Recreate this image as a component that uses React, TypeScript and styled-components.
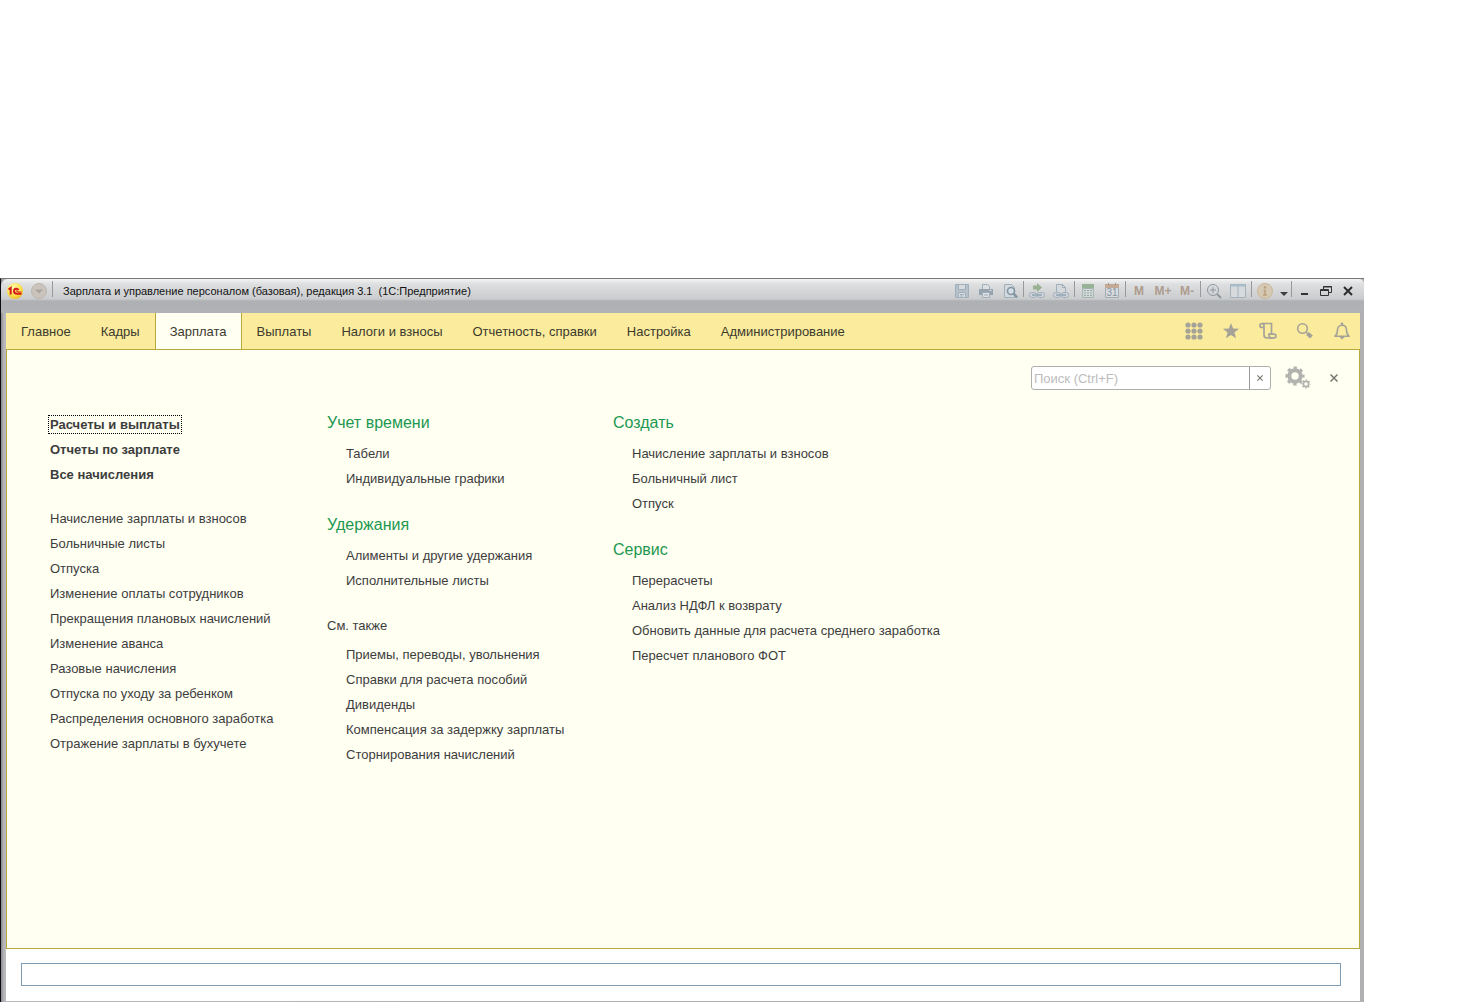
import React from "react";
import styled, { createGlobalStyle } from "styled-components";

const Global = createGlobalStyle`
  * { box-sizing: border-box; }
  body { margin: 0; background: #fff; color: #3d3d3d; font-family: "Liberation Sans", Arial, sans-serif; font-size: 13px; }
  button, input { font-family: inherit; }
`;

const Page = styled.div`
  display: flex;
  height: 100vh;
  min-height: 800px;
  padding: 278px 100px 0 0;
`;

const Window = styled.div`
  flex: 1;
  min-width: 0;
  display: flex;
  flex-direction: column;
  border-left: 1px solid #0c0c10;
  border-top: 1px solid #77787a;
  background: linear-gradient(90deg, #8b8a8e 0, #b8b7bb 3px, #b0b0b3 50%);
`;

const TitleBar = styled.header`
  height: 34px;
  display: flex;
  align-items: flex-start;
  padding: 0 5px 0 2px;
  border-radius: 7px 5px 0 0;
  background: linear-gradient(#f4f4f4 0, #dedfe0 5px, #cbccce 20px, #afb0b3 22px, #b1b2b5 34px);
`;

const Tools = styled.div`
  height: 24px;
  display: flex;
  align-items: center;
`;

const Title = styled.h1`
  flex: 1;
  min-width: 0;
  overflow: hidden;
  margin: 0 0 0 9px;
  line-height: 24px;
  font-size: 11px;
  font-weight: 400;
  color: #111;
  white-space: pre;
`;

const Divider = styled.span`
  width: 1px;
  height: 16px;
  margin: 0 1px 4px;
  background: #98999c;
`;

const Tool = styled.button<{ $w?: number }>`
  width: ${(p) => p.$w ?? 24}px;
  height: 24px;
  padding: 0;
  border: 0;
  background: none;
  display: flex;
  align-items: center;
  justify-content: center;
  font-size: 12px;
  font-weight: 700;
  color: #ad9c8f;
  svg { display: block; flex: none; }
`;

const Body = styled.div`
  flex: 1;
  min-height: 0;
  display: flex;
  flex-direction: column;
  margin: 0 4px 1px 5px;
  background: #fff;
`;

const Sections = styled.nav`
  height: 37px;
  display: flex;
  background: #faec9c;
  border-bottom: 1px solid #b9a93a;
`;

const Section = styled.a<{ $active?: boolean }>`
  height: 36px;
  padding: 0 15px;
  line-height: 37px;
  color: #3d3a2e;
  text-decoration: none;
  white-space: nowrap;
  background: ${(p) => (p.$active ? "#fffff2" : "none")};
  box-shadow: ${(p) => (p.$active ? "inset 1px 0 #b9a93a, inset -1px 0 #b9a93a" : "none")};
`;

const SectionTools = styled.div`
  margin-left: auto;
  display: flex;
  align-items: center;
`;

const Panel = styled.main`
  flex: 1;
  min-height: 0;
  padding: 16px 16px 0 43px;
  border: solid #b9a93a;
  border-width: 0 1px 1px;
  background: #fffff2;
`;

const PanelTools = styled.div`
  display: flex;
  justify-content: flex-end;
  align-items: center;
  gap: 14px;
  height: 24px;
`;

const Search = styled.div`
  width: 240px;
  height: 24px;
  display: flex;
  border: 1px solid #aeaeaa;
  border-radius: 3px;
  background: #fff;
  overflow: hidden;
`;

const SearchInput = styled.input`
  flex: 1;
  min-width: 0;
  border: 0;
  padding: 0 2px;
  outline: 0;
  font-size: 13px;
  background: none;
  &::placeholder { color: #bcbcbc; opacity: 1; }
`;

const Clear = styled.button`
  width: 21px;
  padding: 0;
  border: 0;
  border-left: 1px solid #999;
  background: none;
  display: grid;
  place-items: center;
`;

const Columns = styled.div`
  display: grid;
  grid-template-columns: 277px 286px 1fr;
  padding-top: 19px;
`;

const Column = styled.section``;

const Group = styled.ul<{ $indent?: boolean }>`
  list-style: none;
  margin: 0 0 ${(p) => (p.$indent ? 20 : 19)}px;
  padding: ${(p) => (p.$indent ? "4px 0 0 19px" : "3px 0 0")};
  & + & { padding-top: 0; }
`;

const Item = styled.li<{ $bold?: boolean }>`
  height: 25px;
  line-height: 25px;
  white-space: nowrap;
  font-weight: ${(p) => (p.$bold ? 700 : 400)};
`;

const Command = styled.a<{ $focus?: boolean }>`
  color: inherit;
  text-decoration: none;
  outline: ${(p) => (p.$focus ? "1px dotted #000" : "none")};
  outline-offset: 1px;
`;

const Heading = styled.h2`
  margin: 0;
  height: 28px;
  line-height: 28px;
  font-size: 16px;
  font-weight: 400;
  color: #1d9850;
`;

const SeeAlso = styled.h3`
  margin: 0;
  height: 25px;
  line-height: 25px;
  font-size: 13px;
  font-weight: 400;
`;

const StatusArea = styled.footer`
  height: 52px;
  padding: 14px 19px 0 15px;
`;

const StatusInput = styled.input`
  display: block;
  width: 100%;
  height: 23px;
  border: 1px solid #7f9bb2;
  background: #fff;
  outline: 0;
`;

const sections = ["Главное", "Кадры", "Зарплата", "Выплаты", "Налоги и взносы", "Отчетность, справки", "Настройка", "Администрирование"];

const BLUE = "#a0afbc";

function Svg({ w = 16, h = w, children }: { w?: number; h?: number; children: React.ReactNode }) {
  return (
    <svg width={w} height={h} viewBox={`0 0 ${w} ${h}`} fill="none" aria-hidden="true">
      {children}
    </svg>
  );
}

const Logo = () => (
  <svg width="18" height="18" viewBox="0 0 18 18" role="img" aria-label="1С">
    <defs>
      <radialGradient id="logo" cx=".4" cy=".3" r=".8">
        <stop offset="0" stopColor="#fffbb0" />
        <stop offset=".6" stopColor="#fbe04c" />
        <stop offset="1" stopColor="#e8b21c" />
      </radialGradient>
    </defs>
    <circle cx="9" cy="9" r="8" fill="url(#logo)" />
    <g fill="none" stroke="#d31d16" strokeWidth="2">
      <path d="M2.500 7.500 4.700 6v6.500" />
      <path d="M12.500 8C11.500 6 8 6.300 8 9s2 2.800 3 2.800h4.500" />
    </g>
    <path d="M10 9h1.500v1h4" fill="none" stroke="#d31d16" />
  </svg>
);

const MenuIcon = () => (
  <Svg w={18}>
    <circle cx="9" cy="9" r="7.500" fill="#cac4bc" stroke="#bbb5ad" />
    <path d="M5 7.500h8L9 11.500z" fill="#aaa49d" />
  </Svg>
);

const SaveIcon = () => (
  <Svg>
    <path d="M1.500 1.500h13v13h-13z" fill="#b7c1ca" stroke={BLUE} />
    <path d="M4.500 1.500h7v5h-7zM4.500 9.500h7v5h-7z" fill="#d8dcdf" stroke={BLUE} />
    <path d="M6 11.500h4M6 13h3" stroke={BLUE} />
  </Svg>
);

const PrintIcon = () => (
  <Svg>
    <path d="M4.500 6V1.500h5l2 2V6" fill="#dcdee0" stroke={BLUE} />
    <path d="M1 6h14v6H1z" fill="#97a4af" />
    <path d="M4.500 9.500h7v5h-7z" fill="#dcdee0" stroke={BLUE} />
    <path d="M6 12h4" stroke={BLUE} />
    <path d="M11.500 7.500h2" stroke="#dcdee0" />
  </Svg>
);

const PreviewIcon = () => (
  <Svg>
    <path d="M2.500 1.500h7l3 3v10h-10z" fill="#d6d9dc" stroke={BLUE} />
    <circle cx="9" cy="8" r="3.500" stroke="#8195a5" strokeWidth="1.700" fill="#d6e0e6" />
    <path d="m11.500 10.500 3.500 4" stroke="#8195a5" strokeWidth="2.500" />
  </Svg>
);

const Chain = () => (
  <g stroke={BLUE}>
    <rect x=".5" y="9.500" width="7" height="5" rx="2" fill="#cfd3d7" />
    <rect x="8.500" y="9.500" width="7" height="5" rx="2" fill="#cfd3d7" />
    <path d="M3 12h10" strokeWidth="2" />
  </g>
);

const LinkToIcon = () => (
  <Svg>
    <path d="M4 2.500h4V0l5 4.500L8 9V6.500H4z" fill="#97b191" />
    <Chain />
  </Svg>
);

const LinkDocIcon = () => (
  <Svg>
    <path d="M3.500 9.500v-8h6l3 3v5M9.500 1.500v3h3" fill="#d6d9dc" stroke={BLUE} />
    <Chain />
  </Svg>
);

const CalcIcon = () => (
  <Svg>
    <path d="M2 1h12v4H2z" fill="#97b297" />
    <path d="M2.500 5.500h11v9h-11z" fill="#d2d8d8" stroke="#a3b5af" />
    <path d="M4 7.500h8M4 10h8M4 12.500h8" stroke="#98aaa8" strokeDasharray="2 1" />
  </Svg>
);

const CalendarText = styled.text`
  font: 10px "Liberation Sans", Arial, sans-serif;
  fill: #8795a3;
`;

const CalendarIcon = () => (
  <Svg>
    <path d="M1.500 1.500h13v13h-13z" fill="#d8dbde" stroke="#a2adb6" />
    <path d="M1 1h14v4H1z" fill="#c3a996" />
    <path d="M4.500 0v2M11.500 0v2" stroke="#a98e7c" />
    <CalendarText x="8" y="13" textAnchor="middle">31</CalendarText>
  </Svg>
);

const ZoomIcon = () => (
  <Svg>
    <circle cx="7" cy="7" r="5.500" stroke="#8e979f" />
    <path d="M4 7h6M7 4v6" stroke="#8e979f" />
    <path d="m11 11 4 4" stroke="#8e979f" strokeWidth="2" />
  </Svg>
);

const PanesIcon = () => (
  <Svg>
    <path d="M.5 1.500h15v13H.5z" fill="#d6dadc" stroke="#a3b2bb" />
    <path d="M1 2.500h14" stroke="#a6bfca" strokeWidth="2" />
    <path d="M8 3v11" stroke="#a3b2bb" />
  </Svg>
);

const InfoIcon = () => (
  <Svg>
    <circle cx="8" cy="8" r="7.500" fill="#d5c9b4" stroke="#c8b899" />
    <circle cx="8" cy="4.500" r="1.300" fill="#b8a17e" />
    <path d="M6.500 7.500H8V12M6 12h4" stroke="#b8a17e" strokeWidth="1.500" />
  </Svg>
);

const CaretIcon = () => <Svg w={8} h={12}><path d="M0 7h8L4 11z" fill="#3c3d3f" /></Svg>;
const MinimizeIcon = () => <Svg w={12}><path d="M3 9h7" stroke="#333" strokeWidth="2" /></Svg>;
const RestoreIcon = () => (
  <Svg w={12}>
    <path d="M3.500 4V1.500h8v6H9" stroke="#333" />
    <path d="M3 2h9" stroke="#333" />
    <path d="M.5 4.500h8v6h-8zM.5 5.500h8" stroke="#333" />
  </Svg>
);
const CloseWindowIcon = () => <Svg w={10}><path d="m1 1 8 8M9 1 1 9" stroke="#2c2c2e" strokeWidth="2" /></Svg>;

const CrossIcon = ({ size }: { size: number }) => (
  <svg width={size} height={size} viewBox="0 0 8 8" aria-hidden="true">
    <path d="m.5.5 7 7M7.500.5l-7 7" stroke="#77776f" strokeWidth="1.500" />
  </svg>
);

const GREY = "#a5a298";

const GridIcon = () => (
  <Svg w={18}>
    {[3, 9, 15].flatMap((y) => [3, 9, 15].map((x) => <circle key={`${x}-${y}`} cx={x} cy={y} r="2.600" fill={GREY} />))}
  </Svg>
);
const StarIcon = () => (
  <Svg w={18}>
    <path d="m9 1 2.100 5.600 6 .2-4.700 3.700 1.700 5.800L9 13l-5.100 3.300 1.700-5.800L.9 6.800l6-.2z" fill={GREY} />
  </Svg>
);
const HistoryIcon = () => (
  <Svg w={18}>
    <g stroke={GREY} strokeWidth="1.700">
      <path d="M5 5.500H3a2 2 0 0 1 0-4h9.500V12" />
      <path d="M3 1.700c1.300 0 2 .8 2 2V13a3 3 0 0 0 3 3h7" />
      <path d="M10 12.200h5a1.900 1.900 0 0 1 0 3.800h-2.500c-1.500 0-2.500-1-2.500-2.500z" />
    </g>
  </Svg>
);
const SearchIcon = () => (
  <Svg w={18}>
    <circle cx="6.500" cy="6.500" r="4.800" stroke={GREY} strokeWidth="1.600" />
    <path d="m10 10 2 2" stroke={GREY} strokeWidth="1.300" />
    <path d="m11.500 11.500 4 3.500" stroke={GREY} strokeWidth="4" />
  </Svg>
);
const BellIcon = () => (
  <Svg w={18}>
    <path d="M2 14.200c2-1.400 2.500-3 2.500-6.200 0-3 1.800-4.800 4.500-4.800s4.500 1.800 4.500 4.800c0 3.200.5 4.800 2.500 6.200z" stroke={GREY} strokeWidth="1.600" strokeLinejoin="round" />
    <circle cx="9" cy="2" r="1.400" fill={GREY} />
    <path d="M6.500 15h5L9 17.500z" fill={GREY} />
  </Svg>
);
const GearsIcon = () => (
  <Svg w={26} h={24}>
    <g stroke="#b2b2ae">
      <circle cx="10" cy="10" r="5.700" strokeWidth="4" />
      <circle cx="10" cy="10" r="8.300" strokeWidth="2.600" strokeDasharray="3.260 3.260" strokeDashoffset="1.630" />
      <circle cx="21" cy="18" r="2.600" strokeWidth="1.600" />
      <circle cx="21" cy="18" r="3.900" strokeWidth="1.400" strokeDasharray="1.530 1.530" strokeDashoffset=".770" />
    </g>
  </Svg>
);

function Commands({ items, bold, indent }: { items: string[]; bold?: boolean; indent?: boolean }) {
  return (
    <Group $indent={indent}>
      {items.map((t, i) => (
        <Item key={t} $bold={bold}>
          <Command href="#" $focus={bold && i === 0}>{t}</Command>
        </Item>
      ))}
    </Group>
  );
}

export default function App() {
  return (
    <>
      <Global />
      <Page>
        <Window>
          <TitleBar>
            <Tools>
              <Tool aria-label="О программе"><Logo /></Tool>
              <Tool aria-label="Главное меню"><MenuIcon /></Tool>
              <Divider />
            </Tools>
            <Title>Зарплата и управление персоналом (базовая), редакция 3.1  (1С:Предприятие)</Title>
            <Tools>
              <Tool aria-label="Сохранить"><SaveIcon /></Tool>
              <Tool aria-label="Печать"><PrintIcon /></Tool>
              <Tool aria-label="Предварительный просмотр"><PreviewIcon /></Tool>
              <Divider />
              <Tool aria-label="Перейти по ссылке"><LinkToIcon /></Tool>
              <Tool aria-label="Получить ссылку"><LinkDocIcon /></Tool>
              <Divider />
              <Tool aria-label="Калькулятор"><CalcIcon /></Tool>
              <Tool aria-label="Календарь"><CalendarIcon /></Tool>
              <Divider />
              <Tool>M</Tool>
              <Tool>M+</Tool>
              <Tool>M-</Tool>
              <Divider />
              <Tool aria-label="Масштаб"><ZoomIcon /></Tool>
              <Tool aria-label="Окна"><PanesIcon /></Tool>
              <Divider />
              <Tool aria-label="Справка"><InfoIcon /></Tool>
              <Tool $w={13} aria-label="Ещё"><CaretIcon /></Tool>
              <Divider />
              <Tool $w={22} aria-label="Свернуть"><MinimizeIcon /></Tool>
              <Tool $w={22} aria-label="Восстановить"><RestoreIcon /></Tool>
              <Tool $w={22} aria-label="Закрыть окно"><CloseWindowIcon /></Tool>
            </Tools>
          </TitleBar>
          <Body>
            <Sections>
              {sections.map((s) => (
                <Section key={s} href="#" $active={s === "Зарплата"}>{s}</Section>
              ))}
              <SectionTools>
                <Tool $w={37} aria-label="Меню функций"><GridIcon /></Tool>
                <Tool $w={37} aria-label="Избранное"><StarIcon /></Tool>
                <Tool $w={37} aria-label="История"><HistoryIcon /></Tool>
                <Tool $w={37} aria-label="Поиск"><SearchIcon /></Tool>
                <Tool $w={37} aria-label="Оповещения"><BellIcon /></Tool>
              </SectionTools>
            </Sections>
            <Panel>
              <PanelTools>
                <Search>
                  <SearchInput aria-label="Поиск" placeholder="Поиск (Ctrl+F)" />
                  <Clear aria-label="Очистить"><CrossIcon size={6} /></Clear>
                </Search>
                <Tool $w={26} aria-label="Настройки"><GearsIcon /></Tool>
                <Tool $w={18} aria-label="Закрыть"><CrossIcon size={8} /></Tool>
              </PanelTools>
              <Columns>
                <Column>
                  <Commands bold items={["Расчеты и выплаты", "Отчеты по зарплате", "Все начисления"]} />
                  <Commands
                    items={[
                      "Начисление зарплаты и взносов",
                      "Больничные листы",
                      "Отпуска",
                      "Изменение оплаты сотрудников",
                      "Прекращения плановых начислений",
                      "Изменение аванса",
                      "Разовые начисления",
                      "Отпуска по уходу за ребенком",
                      "Распределения основного заработка",
                      "Отражение зарплаты в бухучете",
                    ]}
                  />
                </Column>
                <Column>
                  <Heading>Учет времени</Heading>
                  <Commands indent items={["Табели", "Индивидуальные графики"]} />
                  <Heading>Удержания</Heading>
                  <Commands indent items={["Алименты и другие удержания", "Исполнительные листы"]} />
                  <SeeAlso>См. также</SeeAlso>
                  <Commands
                    indent
                    items={[
                      "Приемы, переводы, увольнения",
                      "Справки для расчета пособий",
                      "Дивиденды",
                      "Компенсация за задержку зарплаты",
                      "Сторнирования начислений",
                    ]}
                  />
                </Column>
                <Column>
                  <Heading>Создать</Heading>
                  <Commands indent items={["Начисление зарплаты и взносов", "Больничный лист", "Отпуск"]} />
                  <Heading>Сервис</Heading>
                  <Commands
                    indent
                    items={[
                      "Перерасчеты",
                      "Анализ НДФЛ к возврату",
                      "Обновить данные для расчета среднего заработка",
                      "Пересчет планового ФОТ",
                    ]}
                  />
                </Column>
              </Columns>
            </Panel>
            <StatusArea>
              <StatusInput aria-label="Сообщение" />
            </StatusArea>
          </Body>
        </Window>
      </Page>
    </>
  );
}
